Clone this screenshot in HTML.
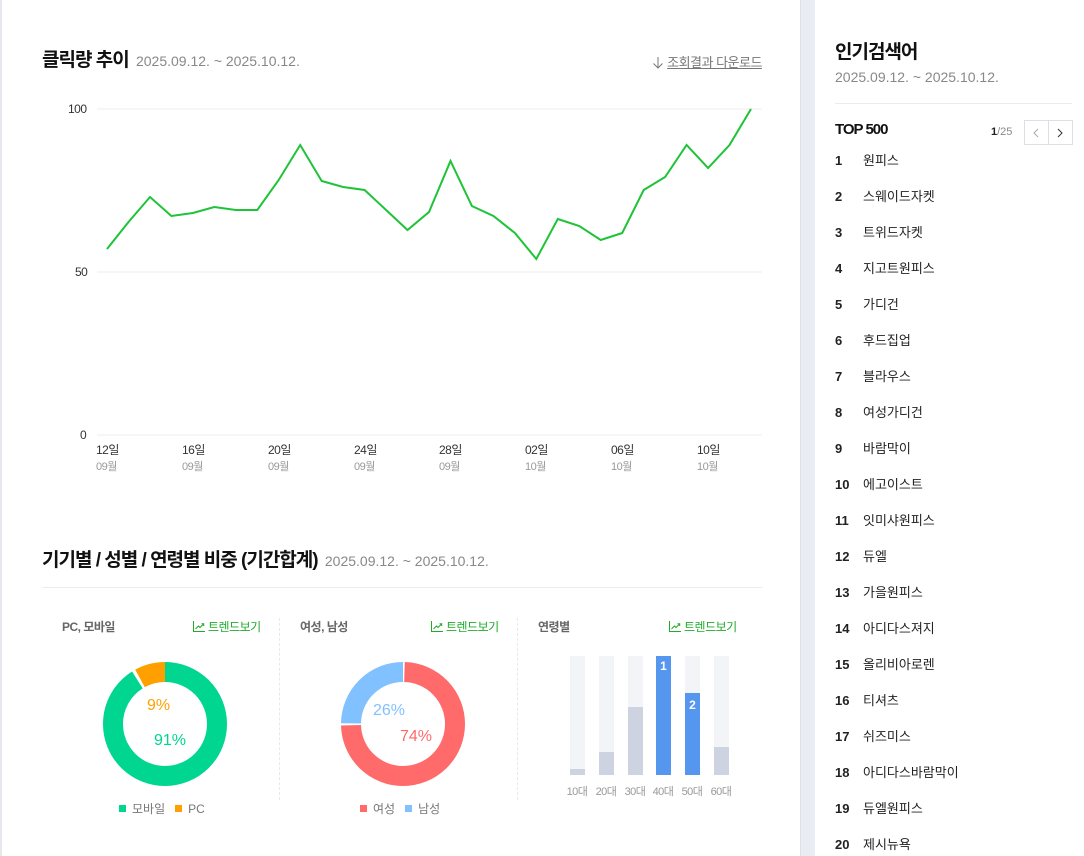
<!DOCTYPE html>
<html><head><meta charset="utf-8"><style>
*{margin:0;padding:0;box-sizing:border-box}
body{width:1084px;height:856px;overflow:hidden;background:#fff;font-family:"Liberation Sans","Noto Sans CJK KR",sans-serif;position:relative;color:#222}
.a{position:absolute;white-space:nowrap}
.h{font-size:19px;font-weight:bold;color:#111;letter-spacing:-1px}
.d{font-size:14px;color:#888;font-weight:normal;letter-spacing:0;margin-left:3px}
.ax{font-size:12px;color:#333;letter-spacing:-0.5px}
.mo{font-size:11px;color:#999;letter-spacing:-0.5px}
.sub{font-size:12px;color:#666;font-weight:bold;letter-spacing:-0.5px}
.tr{font-size:12px;color:#1fab2b;letter-spacing:-0.5px}
.tr svg{vertical-align:-1px;margin-right:3px}
.lg{font-size:12px;color:#777}
.sq{display:inline-block;width:7px;height:7px;margin-right:6px;vertical-align:1px}
.rk{font-size:13px;color:#222;line-height:18px;height:18px;width:240px}
.rk b{position:absolute;left:0;top:0;font-weight:bold;line-height:18px}
.rk span{position:absolute;left:28px;top:0;line-height:18px}
.ag{position:absolute;top:783px;font-size:11px;color:#999;width:30px;text-align:center;letter-spacing:-0.5px}
</style></head><body>
<div class="a" style="left:0;top:0;width:2px;height:856px;background:#e4e7ee"></div>
<div class="a" style="left:800px;top:0;width:15px;height:856px;background:#e9ecf3;border-left:1px solid #dde0e8"></div>

<div class="a h" style="left:42px;top:45px">클릭량 추이 <span class="d">2025.09.12. ~ 2025.10.12.</span></div>
<div class="a" style="left:652px;top:52px;font-size:13px;color:#777;letter-spacing:-0.5px"><svg width="12" height="13" style="vertical-align:-2px"><path d="M6 1V12M1.5 7.5L6 12L10.5 7.5" fill="none" stroke="#777" stroke-width="1"/></svg> <span style="text-decoration:underline">조회결과 다운로드</span></div>

<svg class="a" style="left:0;top:0" width="800" height="480">
<line x1="97" y1="109" x2="762" y2="109" stroke="#ececec"/>
<line x1="97" y1="272" x2="762" y2="272" stroke="#ececec"/>
<line x1="97" y1="435" x2="762" y2="435" stroke="#ececec"/>
<polyline fill="none" stroke="#1ec337" stroke-width="2" points="107,249 128.5,222 150,197 171.4,216 192.9,213 214.3,207 235.8,210 257.3,210 278.7,180 300.2,145 321.7,181 343.1,187 364.6,190 386.1,210 407.5,230 429,212 450.5,161 471.9,206 493.4,216 514.9,233 536.3,259 557.8,219 579.3,226 600.7,240 622.2,233 643.7,190 665.1,177 686.6,145 708.1,168 729.5,145 751,109"/>
</svg>
<div class="a ax" style="left:68px;top:102px">100</div>
<div class="a ax" style="left:75px;top:265px">50</div>
<div class="a ax" style="left:80px;top:428px">0</div>
<div class="a" style="left:96px;top:441px;width:700px">
<div class="a" style="left:0"><div class="ax">12일</div><div class="mo">09월</div></div>
<div class="a" style="left:86px"><div class="ax">16일</div><div class="mo">09월</div></div>
<div class="a" style="left:172px"><div class="ax">20일</div><div class="mo">09월</div></div>
<div class="a" style="left:258px"><div class="ax">24일</div><div class="mo">09월</div></div>
<div class="a" style="left:343px"><div class="ax">28일</div><div class="mo">09월</div></div>
<div class="a" style="left:429px"><div class="ax">02일</div><div class="mo">10월</div></div>
<div class="a" style="left:515px"><div class="ax">06일</div><div class="mo">10월</div></div>
<div class="a" style="left:601px"><div class="ax">10일</div><div class="mo">10월</div></div>
</div>

<div class="a h" style="left:42px;top:545px">기기별 / 성별 / 연령별 비중 (기간합계) <span class="d">2025.09.12. ~ 2025.10.12.</span></div>
<div class="a" style="left:42px;top:587px;width:720px;height:1px;background:#ececec"></div>
<div class="a" style="left:279px;top:618px;height:182px;border-left:1px dashed #e8e8e8"></div>
<div class="a" style="left:517px;top:618px;height:182px;border-left:1px dashed #e8e8e8"></div>

<div class="a sub" style="left:62px;top:618px">PC, 모바일</div>
<div class="a tr" style="left:193px;top:618px"><svg width="12" height="11"><path d="M0.5 0V10.5H12M2.5 8L5.5 5L7 6.5L10.5 3M8.5 2.8H10.7V5" fill="none" stroke="#1fab2b" stroke-width="1"/></svg>트렌드보기</div>
<div class="a sub" style="left:300px;top:618px">여성, 남성</div>
<div class="a tr" style="left:431px;top:618px"><svg width="12" height="11"><path d="M0.5 0V10.5H12M2.5 8L5.5 5L7 6.5L10.5 3M8.5 2.8H10.7V5" fill="none" stroke="#1fab2b" stroke-width="1"/></svg>트렌드보기</div>
<div class="a sub" style="left:538px;top:618px">연령별</div>
<div class="a tr" style="left:669px;top:618px"><svg width="12" height="11"><path d="M0.5 0V10.5H12M2.5 8L5.5 5L7 6.5L10.5 3M8.5 2.8H10.7V5" fill="none" stroke="#1fab2b" stroke-width="1"/></svg>트렌드보기</div>

<svg class="a" style="left:0;top:600px" width="800" height="256">
<g transform="translate(165,124) rotate(-90)">
<circle r="52" fill="none" stroke="#00d690" stroke-width="20" stroke-dasharray="297.3 329.7"/>
<circle r="52" fill="none" stroke="#ffa000" stroke-width="20" stroke-dasharray="27.7 329.7" stroke-dashoffset="-300.3"/>
</g>
<g transform="translate(403,124) rotate(-90)">
<circle r="52" fill="none" stroke="#ff6b6b" stroke-width="20" stroke-dasharray="242 329.7" stroke-dashoffset="-1.5"/>
<circle r="52" fill="none" stroke="#82c1ff" stroke-width="20" stroke-dasharray="82.7 329.7" stroke-dashoffset="-245.5"/>
</g>
<g>
<rect x="570" y="56" width="15" height="119" fill="#f3f4f7"/><rect x="570" y="169" width="15" height="6" fill="#cdd3e0"/>
<rect x="599" y="56" width="15" height="119" fill="#f3f4f7"/><rect x="599" y="152" width="15" height="23" fill="#cdd3e0"/>
<rect x="628" y="56" width="15" height="119" fill="#f3f4f7"/><rect x="628" y="107" width="15" height="68" fill="#cdd3e0"/>
<rect x="656" y="56" width="15" height="119" fill="#5596ee"/>
<rect x="685" y="56" width="15" height="119" fill="#f3f4f7"/><rect x="685" y="93" width="15" height="82" fill="#5596ee"/>
<rect x="714" y="56" width="15" height="119" fill="#f3f4f7"/><rect x="714" y="147" width="15" height="28" fill="#cdd3e0"/>
</g>
<text x="663.5" y="70" fill="#fff" font-size="12" font-weight="bold" text-anchor="middle" font-family="Liberation Sans">1</text>
<text x="692.5" y="109" fill="#fff" font-size="12" font-weight="bold" text-anchor="middle" font-family="Liberation Sans">2</text>
</svg>
<div class="a" style="left:147px;top:697px;font-size:16px;color:#ffa000">9%</div>
<div class="a" style="left:154px;top:732px;font-size:16px;color:#00d690">91%</div>
<div class="a" style="left:373px;top:702px;font-size:16px;color:#82c1ff">26%</div>
<div class="a" style="left:400px;top:728px;font-size:16px;color:#ff6b6b">74%</div>
<div class="ag" style="left:562px">10대</div>
<div class="ag" style="left:591px">20대</div>
<div class="ag" style="left:620px">30대</div>
<div class="ag" style="left:648px">40대</div>
<div class="ag" style="left:677px">50대</div>
<div class="ag" style="left:706px">60대</div>
<div class="a lg" style="left:119px;top:800px"><span class="sq" style="background:#00d690"></span>모바일 &nbsp;&nbsp;<span class="sq" style="background:#ffa000"></span>PC</div>
<div class="a lg" style="left:360px;top:800px"><span class="sq" style="background:#ff6b6b"></span>여성 &nbsp;&nbsp;<span class="sq" style="background:#82c1ff"></span>남성</div>

<div class="a" style="left:835px;top:37px;font-size:19px;font-weight:bold;color:#111;letter-spacing:-1px">인기검색어</div>
<div class="a" style="left:835px;top:69px;font-size:14px;color:#888">2025.09.12. ~ 2025.10.12.</div>
<div class="a" style="left:835px;top:103px;width:237px;height:1px;background:#ececec"></div>
<div class="a" style="left:835px;top:121px;font-size:15px;font-weight:bold;color:#111;letter-spacing:-1px">TOP 500</div>
<div class="a" style="left:991px;top:126px;font-size:11px;color:#888"><b style="color:#222">1</b>/25</div>
<div class="a" style="left:1024px;top:120px;width:49px;height:25px;border:1px solid #dcdfe6;display:flex">
<div style="width:24px;border-right:1px solid #dcdfe6;display:flex;align-items:center;justify-content:center"><svg width="6" height="10"><path d="M5 1L1 5L5 9" fill="none" stroke="#aaa"/></svg></div><div style="width:24px;display:flex;align-items:center;justify-content:center"><svg width="6" height="10"><path d="M1 1L5 5L1 9" fill="none" stroke="#333"/></svg></div></div>

<div class="a" style="left:835px;top:152px;width:240px">
<div class="a rk" style="top:0"><b>1</b><span>원피스</span></div>
<div class="a rk" style="top:36px"><b>2</b><span>스웨이드자켓</span></div>
<div class="a rk" style="top:72px"><b>3</b><span>트위드자켓</span></div>
<div class="a rk" style="top:108px"><b>4</b><span>지고트원피스</span></div>
<div class="a rk" style="top:144px"><b>5</b><span>가디건</span></div>
<div class="a rk" style="top:180px"><b>6</b><span>후드집업</span></div>
<div class="a rk" style="top:216px"><b>7</b><span>블라우스</span></div>
<div class="a rk" style="top:252px"><b>8</b><span>여성가디건</span></div>
<div class="a rk" style="top:288px"><b>9</b><span>바람막이</span></div>
<div class="a rk" style="top:324px"><b>10</b><span>에고이스트</span></div>
<div class="a rk" style="top:360px"><b>11</b><span>잇미샤원피스</span></div>
<div class="a rk" style="top:396px"><b>12</b><span>듀엘</span></div>
<div class="a rk" style="top:432px"><b>13</b><span>가을원피스</span></div>
<div class="a rk" style="top:468px"><b>14</b><span>아디다스져지</span></div>
<div class="a rk" style="top:504px"><b>15</b><span>올리비아로렌</span></div>
<div class="a rk" style="top:540px"><b>16</b><span>티셔츠</span></div>
<div class="a rk" style="top:576px"><b>17</b><span>쉬즈미스</span></div>
<div class="a rk" style="top:612px"><b>18</b><span>아디다스바람막이</span></div>
<div class="a rk" style="top:648px"><b>19</b><span>듀엘원피스</span></div>
<div class="a rk" style="top:684px"><b>20</b><span>제시뉴욕</span></div>
</div>
</body></html>
